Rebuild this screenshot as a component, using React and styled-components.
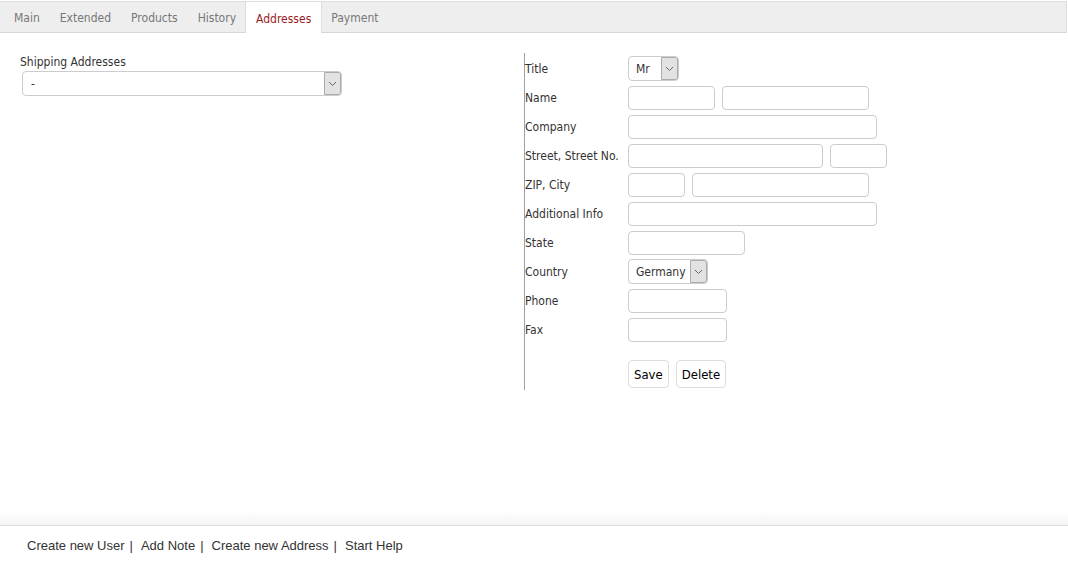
import React from "react"
import styled, { createGlobalStyle } from "styled-components"

const GlobalStyle = createGlobalStyle`
  html, body {
    margin: 0;
    padding: 0;
    background: #fff;
  }
  body {
    font-family: "DejaVu Sans Condensed", "DejaVu Sans", sans-serif;
    font-size: 12px;
    color: #333;
  }
`

const Page = styled.div`
  display: flex;
  flex-direction: column;
  height: 564px;
  padding-top: 1px;
  box-sizing: border-box;
`

const TabBar = styled.ul`
  display: flex;
  margin: 0;
  padding: 0 0 0 4px;
  list-style: none;
  width: 1062px;
  height: 30px;
  background: #eeeeee;
  border-top: 1px solid #dddddd;
  border-bottom: 1px solid #d6d6d6;
  border-right: 1px solid #dddddd;
`

const Tab = styled.li`
  display: flex;
  align-items: center;
  box-sizing: border-box;
  padding: 2px 10px 0;
  height: ${p => (p.active ? "31px" : "30px")};
  margin-right: ${p => (p.active ? "-1px" : "0")};
  margin-left: ${p => (p.active ? "-1px" : "0")};
  background: ${p => (p.active ? "#ffffff" : "transparent")};
  border-left: ${p => (p.active ? "1px solid #dddddd" : "none")};
  border-right: ${p => (p.active ? "1px solid #dddddd" : "none")};
  color: ${p => (p.active ? "#9a1b22" : "#777777")};
  cursor: pointer;
`

const Main = styled.div`
  flex: 1;
  display: grid;
  grid-template-columns: 504px 1fr;
  padding: 20px 0 0 20px;
`

const LeftCol = styled.div`
  padding-top: 2px;
`

const FieldLabel = styled.div`
  margin-bottom: 2px;
`

const SelectBox = styled.div`
  display: flex;
  align-items: center;
  box-sizing: border-box;
  width: ${p => p.width}px;
  height: 25px;
  margin-left: ${p => p.offset || 0}px;
  border: 1px solid #cccccc;
  border-radius: 4px;
  background: #fff;
  cursor: default;
`

const SelectValue = styled.span`
  flex: 1;
  padding-left: ${p => p.pad || 7}px;
`

const Arrow = styled.span`
  display: flex;
  align-items: center;
  justify-content: center;
  width: 17px;
  height: 23px;
  box-sizing: border-box;
  background: #e2e2e2;
  border: 1px solid #acacac;
  border-radius: 0 3px 3px 0;
`

const RightCol = styled.div`
  border-left: 1px solid #a0a0a0;
  align-self: start;
  padding: 1px 0 2px 0;
`

const Row = styled.div`
  display: flex;
  align-items: center;
  height: 29px;
`

const RowLabel = styled.div`
  width: 103px;
  flex-shrink: 0;
`

const Inputs = styled.div`
  display: flex;
  gap: 7px;
`

const Input = styled.input`
  box-sizing: border-box;
  width: ${p => p.width}px;
  height: 24px;
  margin: 0;
  border: 1px solid #cccccc;
  border-radius: 4px;
  background: #fff;
  font: inherit;
  padding: 0 5px;
  outline: none;
`

const Actions = styled.div`
  display: flex;
  gap: 7px;
  margin: 16px 0 0 103px;
`

const Button = styled.button`
  height: 28px;
  padding: 0 5px;
  border: 1px solid #dddddd;
  border-radius: 4px;
  background: #fff;
  color: #000;
  font-family: "DejaVu Sans Condensed", "DejaVu Sans", sans-serif;
  font-size: 13px;
  cursor: pointer;
`

const Shade = styled.div`
  height: 15px;
  background: linear-gradient(#ffffff, #f5f5f5);
`

const Footer = styled.div`
  display: flex;
  align-items: center;
  height: 38px;
  padding-left: 27px;
  border-top: 1px solid #dcdcdc;
  font-family: "Liberation Sans", Arial, sans-serif;
  font-size: 13px;
`

const FooterLink = styled.a`
  color: #333;
  text-decoration: none;
  cursor: pointer;
`

const Sep = styled.span`
  color: #333;
  padding: 0 8px 0 5px;
`

const Chevron = () => (
  <svg width="9" height="6" viewBox="0 0 9 6">
    <path d="M1 1 L4.5 4.5 L8 1" fill="none" stroke="#666" strokeWidth="1" />
  </svg>
)

const Select = ({ width, value }) => (
  <SelectBox width={width}>
    <SelectValue>{value}</SelectValue>
    <Arrow>
      <Chevron />
    </Arrow>
  </SelectBox>
)

const tabs = ["Main", "Extended", "Products", "History", "Addresses", "Payment"]

const rows = [
  { label: "Name", inputs: [87, 147] },
  { label: "Company", inputs: [249] },
  { label: "Street, Street No.", inputs: [195, 57] },
  { label: "ZIP, City", inputs: [57, 177] },
  { label: "Additional Info", inputs: [249] },
  { label: "State", inputs: [117] },
]

const footerLinks = ["Create new User", "Add Note", "Create new Address", "Start Help"]

const App = () => (
  <Page>
    <GlobalStyle />
    <TabBar>
      {tabs.map(t => (
        <Tab key={t} active={t === "Addresses"}>
          {t}
        </Tab>
      ))}
    </TabBar>
    <Main>
      <LeftCol>
        <FieldLabel>Shipping Addresses</FieldLabel>
        <SelectBox width={320} offset={2}>
          <SelectValue pad={8}>-</SelectValue>
          <Arrow>
            <Chevron />
          </Arrow>
        </SelectBox>
      </LeftCol>
      <RightCol>
        <Row>
          <RowLabel>Title</RowLabel>
          <Select width={51} value="Mr" />
        </Row>
        {rows.map(r => (
          <Row key={r.label}>
            <RowLabel>{r.label}</RowLabel>
            <Inputs>
              {r.inputs.map((w, i) => (
                <Input key={i} width={w} />
              ))}
            </Inputs>
          </Row>
        ))}
        <Row>
          <RowLabel>Country</RowLabel>
          <Select width={80} value="Germany" />
        </Row>
        <Row>
          <RowLabel>Phone</RowLabel>
          <Input width={99} />
        </Row>
        <Row>
          <RowLabel>Fax</RowLabel>
          <Input width={99} />
        </Row>
        <Actions>
          <Button>Save</Button>
          <Button>Delete</Button>
        </Actions>
      </RightCol>
    </Main>
    <Shade />
    <Footer>
      {footerLinks.map((l, i) => (
        <React.Fragment key={l}>
          <FooterLink>{l}</FooterLink>
          {i < footerLinks.length - 1 && <Sep>|</Sep>}
        </React.Fragment>
      ))}
    </Footer>
  </Page>
)

export default App
